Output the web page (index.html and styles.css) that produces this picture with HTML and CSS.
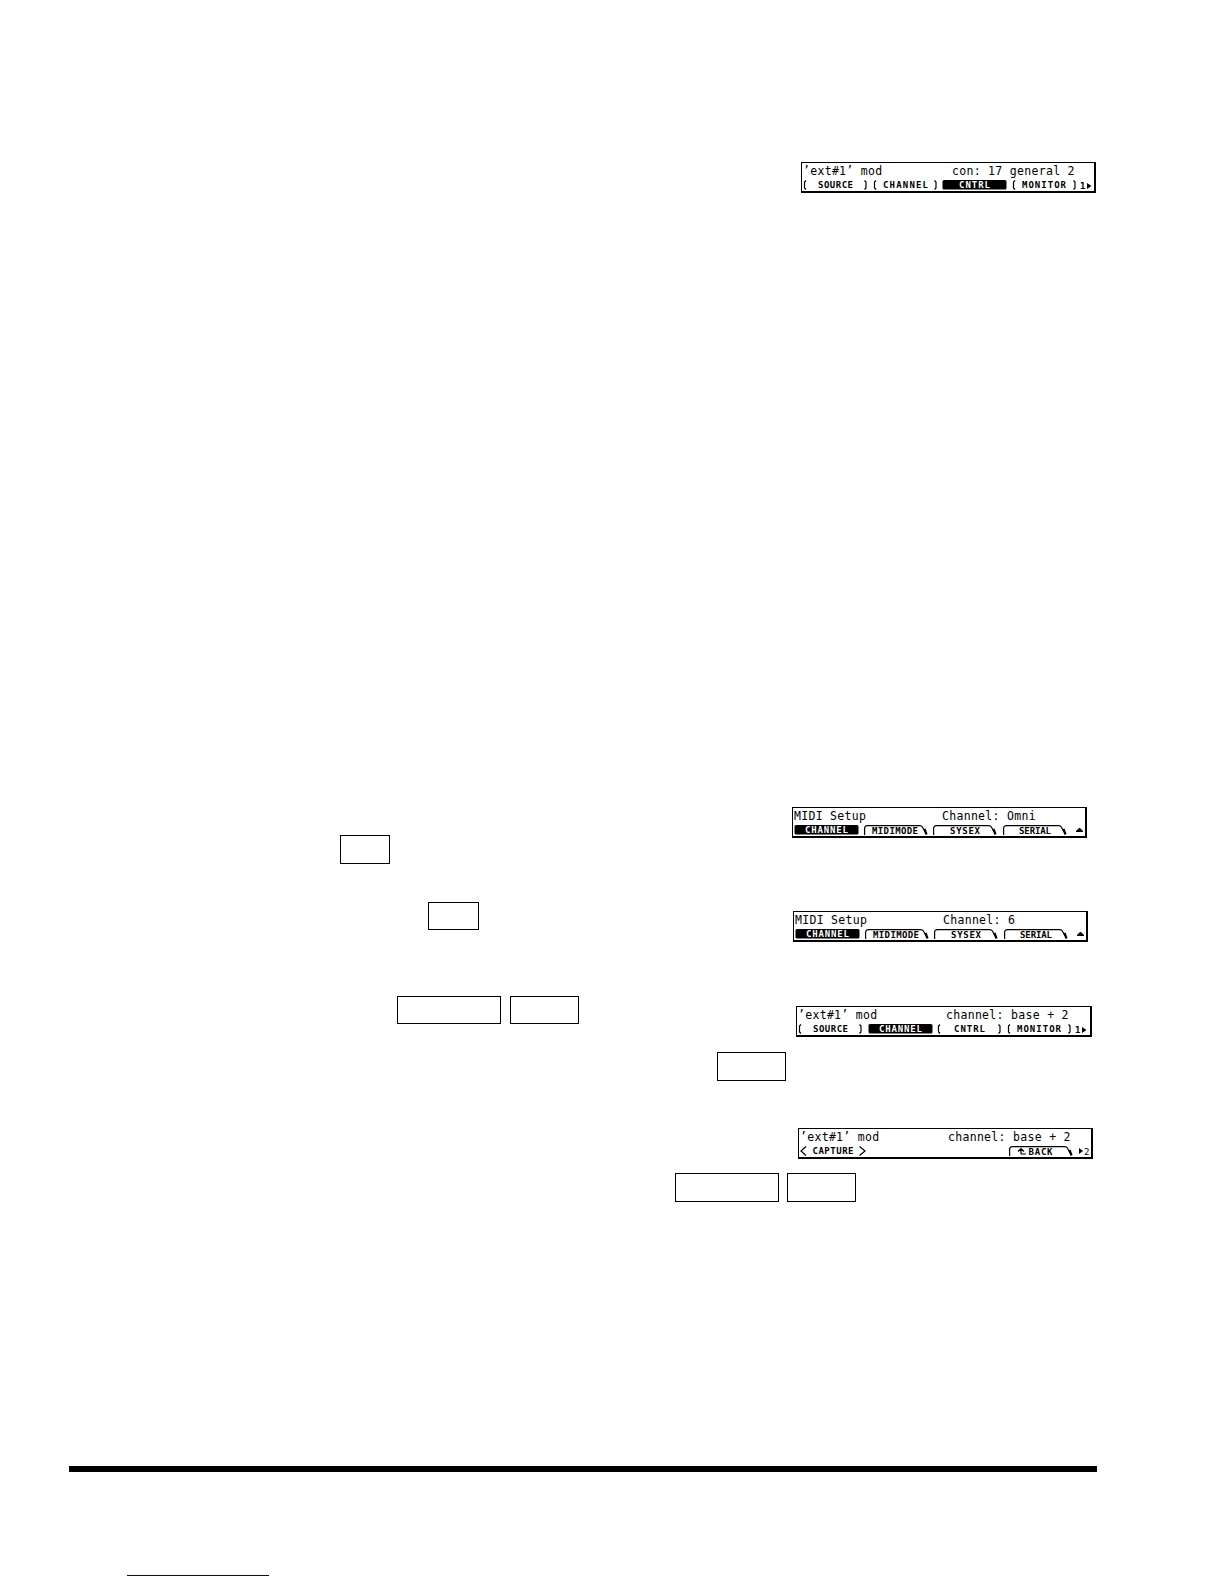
FILE: index.html
```html
<!DOCTYPE html>
<html lang="en">
  <head>
    <meta charset="UTF-8" />
    <meta name="viewport" content="width=device-width, initial-scale=1.0" />
    <title>MIDI Setup</title>
    <link rel="stylesheet" href="styles.css">
  </head>
  <body>
    <!-- Shapes shared by the soft keys -->
    <svg class="shapes">
      <symbol id="paren" viewBox="0 0 65 10">
        <path d="M3 .5L1.5 2V8L3 9.5M61.5 .5L63 2V8L61.5 9.5" />
      </symbol>
      <symbol id="tab" viewBox="0 0 65 10">
        <path d="M.6 10V3.5Q.6 .6 3.5 .6H56Q58 .6 59 3L61 7" />
        <path class="thick" d="M60.5 4L62.5 9.5" />
      </symbol>
      <symbol id="box" viewBox="0 0 65 10">
        <rect class="solid" x=".5" y="0" width="64" height="9.5" rx="1.5" />
      </symbol>
    </svg>

    <main>
      <div class="row intro">
        <section class="lcd">
          <header><span>’ext#1’ mod</span><span>con: 17 general 2</span></header>
          <div class="softkeys">
            <svg><use href="#paren" /><text x="15" y="8" textLength="35">SOURCE</text></svg>
            <svg><use href="#paren" /><text x="10" y="8" textLength="45">CHANNEL</text></svg>
            <svg class="active"><use href="#box" /><text x="17" y="8" textLength="31">CNTRL</text></svg>
            <svg><use href="#paren" /><text x="10" y="8" textLength="44">MONITOR</text></svg>
            <svg class="more"><text x="-1" y="9" textLength="5">1</text><path class="solid" d="M6 3L10.5 6L6 9Z" /></svg>
          </div>
        </section>
      </div>

      <div class="row omni">
        <div class="key"></div>
        <section class="lcd">
          <header><span>MIDI Setup</span><span>Channel: Omni</span></header>
          <div class="softkeys">
            <svg class="active"><use href="#box" /><text x="11" y="8" textLength="43">CHANNEL</text></svg>
            <svg><use href="#tab" /><text x="8" y="9" textLength="46">MIDIMODE</text></svg>
            <svg><use href="#tab" /><text x="17" y="9" textLength="30">SYSEX</text></svg>
            <svg><use href="#tab" /><text x="16" y="9" textLength="32">SERIAL</text></svg>
            <svg class="more"><path class="solid" d="M4 7V6L7 3H8L11 6V7Z" /></svg>
          </div>
        </section>
      </div>

      <div class="row six">
        <div class="key"></div>
        <section class="lcd">
          <header><span>MIDI Setup</span><span>Channel: 6</span></header>
          <div class="softkeys">
            <svg class="active"><use href="#box" /><text x="11" y="8" textLength="43">CHANNEL</text></svg>
            <svg><use href="#tab" /><text x="8" y="9" textLength="46">MIDIMODE</text></svg>
            <svg><use href="#tab" /><text x="17" y="9" textLength="30">SYSEX</text></svg>
            <svg><use href="#tab" /><text x="16" y="9" textLength="32">SERIAL</text></svg>
            <svg class="more"><path class="solid" d="M4 7V6L7 3H8L11 6V7Z" /></svg>
          </div>
        </section>
      </div>

      <div class="row base">
        <div class="key wide"></div>
        <div class="key medium"></div>
        <section class="lcd">
          <header><span>’ext#1’ mod</span><span>channel: base + 2</span></header>
          <div class="softkeys">
            <svg><use href="#paren" /><text x="15" y="8" textLength="35">SOURCE</text></svg>
            <svg class="active"><use href="#box" /><text x="11" y="8" textLength="43">CHANNEL</text></svg>
            <svg><use href="#paren" /><text x="17" y="8" textLength="31">CNTRL</text></svg>
            <svg><use href="#paren" /><text x="10" y="8" textLength="44">MONITOR</text></svg>
            <svg class="more"><text x="-1" y="9" textLength="5">1</text><path class="solid" d="M6 3L10.5 6L6 9Z" /></svg>
          </div>
        </section>
      </div>

      <div class="row single">
        <div class="key medium"></div>
      </div>

      <div class="row capture">
        <section class="lcd">
          <header><span>’ext#1’ mod</span><span>channel: base + 2</span></header>
          <div class="softkeys">
            <svg><path d="M6 .5L1 5L6 9.5M59.5 .5L65 5L59.5 9.5" /><text x="12.5" y="8" textLength="41">CAPTURE</text></svg>
            <svg></svg>
            <svg></svg>
            <svg><use href="#tab" /><path d="M12 8V3M9 5.5L12 2.5L15 5.5M12 8H17" /><text x="19.5" y="9" textLength="24">BACK</text></svg>
            <svg class="more"><path class="solid" d="M1 2L5 5L1 8Z" /><text class="light" x="6" y="8.5" textLength="5">2</text></svg>
          </div>
        </section>
      </div>

      <div class="row last">
        <div class="key wide"></div>
        <div class="key medium"></div>
      </div>
    </main>

    <footer>
      <div class="link"></div>
    </footer>
  </body>
</html>
```

FILE: styles.css
```css
body {
  margin: 0;
  background-color: white;
  color: black;
}
.shapes {
  display: none;
}

/* Each row holds the key boxes on the left and a display on the right */
.row {
  display: flex;
  align-items: flex-start;
  box-sizing: border-box;
}
.row .lcd {
  margin-left: auto;
}
.intro {
  padding: 162px 128px 0 0;
}
.omni {
  margin-top: 614px;
  padding: 0 137px 0 340px;
}
.omni .key {
  margin-top: 28px;
  height: 29px;
}
.six {
  margin-top: 38px;
  padding: 0 136px 0 428px;
}
.six .key {
  width: 51px;
}
.six .lcd {
  margin-top: 9px;
}
.base {
  margin-top: 54px;
  padding: 0 132px 0 397px;
  gap: 9px;
}
.base .lcd {
  width: 296px;
  margin-top: 10px;
}
.single {
  margin-top: 15px;
  padding-left: 717px;
}
.capture {
  margin-top: 47px;
  padding-right: 131px;
}
.last {
  margin-top: 14px;
  padding-left: 675px;
  gap: 8px;
}
.single .key, .last .key {
  height: 29px;
}

.key {
  box-sizing: border-box;
  width: 50px;
  height: 28px;
  border: 1px solid black;
}
.key.medium {
  width: 69px;
}
.key.wide {
  width: 104px;
}

/* Display of the device */
.lcd {
  box-sizing: border-box;
  width: 295px;
  height: 31px;
  border: 1px solid black;
  border-right-width: 2px;
  border-bottom-width: 2px;
  font-family: "DejaVu Sans Mono", monospace;
}
.lcd header {
  display: grid;
  grid-template-columns: 148px 1fr;
  height: 17px;
  padding-left: 1px;
  font-size: 11.5px;
  line-height: 16px;
  letter-spacing: 0.3px;
  white-space: pre;
}
.intro .lcd header {
  grid-template-columns: 149px 1fr;
}
.softkeys {
  display: flex;
  gap: 4.5px;
  padding-left: 1px;
}
.softkeys svg {
  width: 65px;
  height: 10px;
  flex: none;
  overflow: visible;
  fill: none;
  stroke: black;
  stroke-width: 1.2;
}
.softkeys .more {
  width: 13px;
}
.softkeys text {
  font-size: 9px;
  font-weight: bold;
  fill: black;
  stroke: none;
}
.softkeys .light {
  font-weight: normal;
}
.softkeys .active text {
  fill: white;
}
.solid {
  fill: black;
  stroke: none;
}
.thick {
  stroke-width: 2.2;
}

footer {
  margin-top: 264px;
  margin-left: 69px;
  width: 1028px;
  border-top: 6px solid black;
}
footer .link {
  margin: 103px 0 0 58px;
  width: 142px;
  height: 1px;
  background-color: #0000a0;
}
```
